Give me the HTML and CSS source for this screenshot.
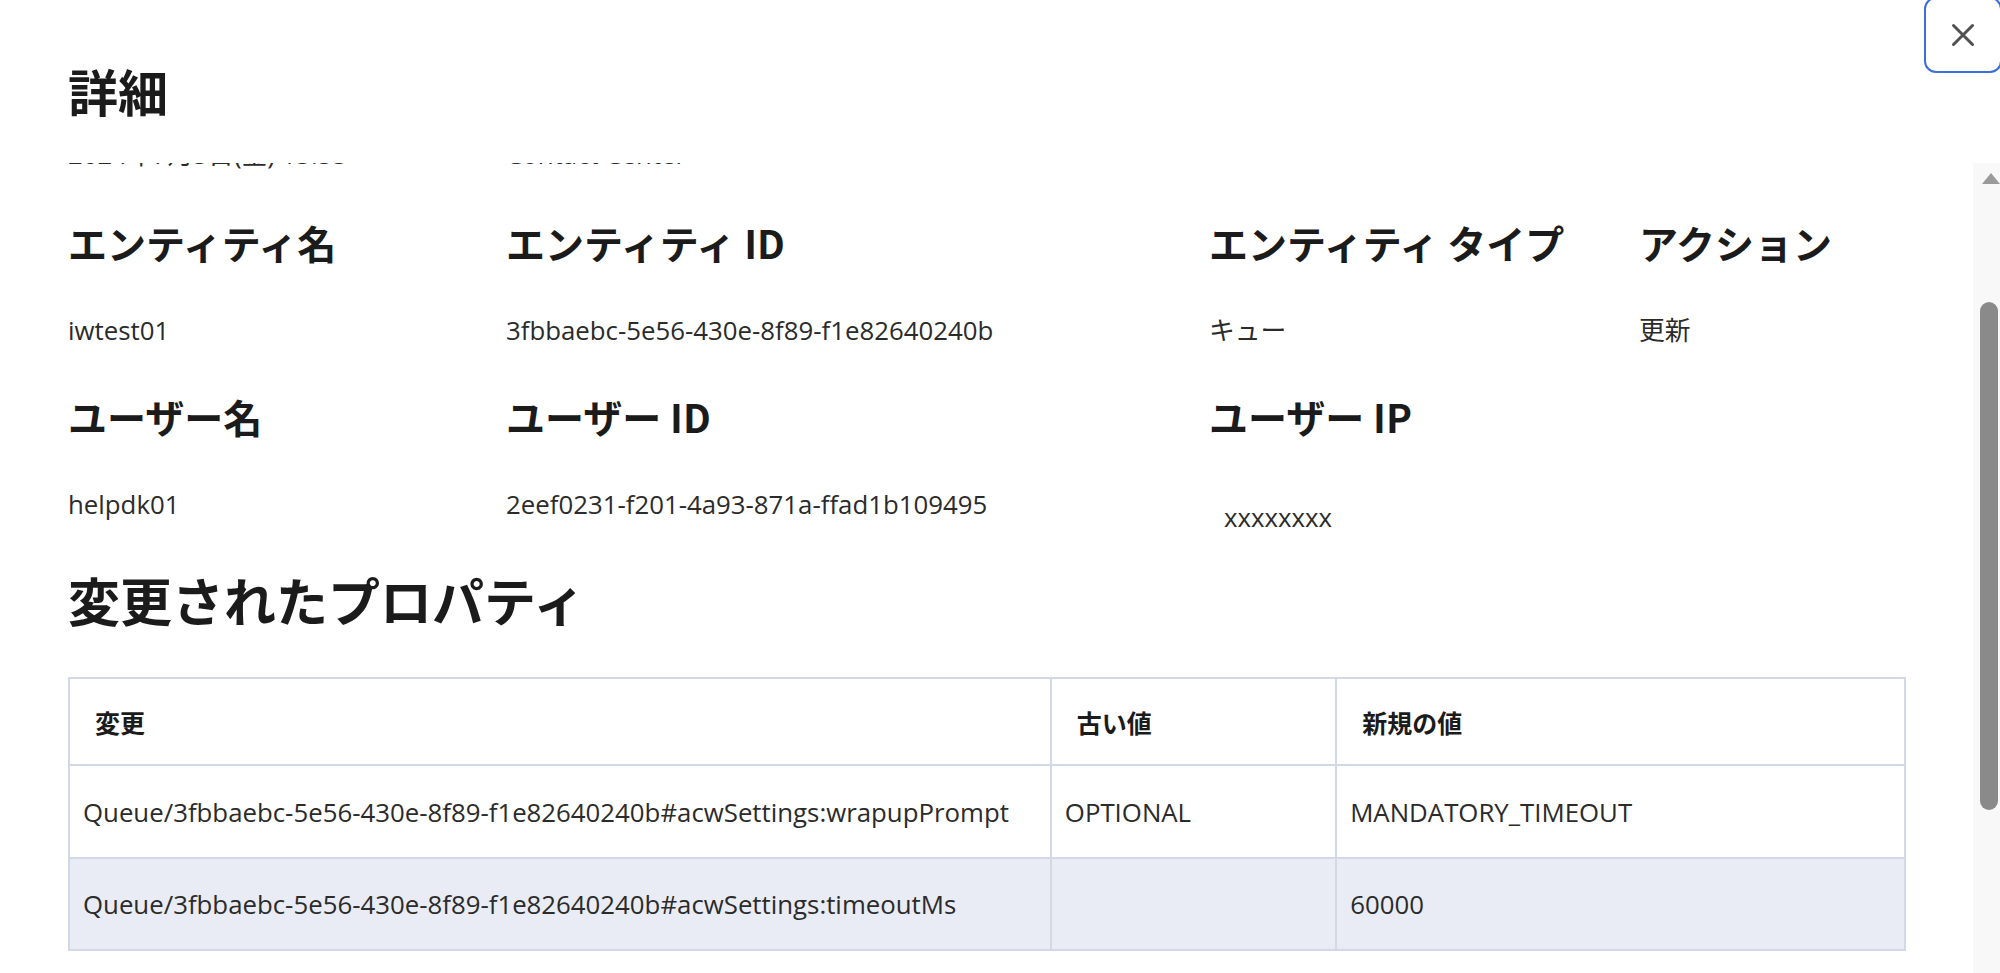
FILE: index.html
```html
<!DOCTYPE html>
<html lang="ja">
<head>
<meta charset="utf-8">
<title>詳細</title>
<link rel="stylesheet" href="styles.css">
</head>
<body>
<div class="dialog">
  <header class="dlg-head">
    <h1 class="dlg-title">詳細</h1>
  </header>
  <button class="close-btn" aria-label="閉じる">
    <svg width="24" height="24" viewBox="0 0 24 24"><path d="M2.5 2.5 L21.5 21.5 M21.5 2.5 L2.5 21.5" stroke="#505050" stroke-width="3" stroke-linecap="round" fill="none"/></svg>
  </button>
  <div class="dlg-body">
    <div class="scroll">
      <div class="content">
        <div class="fields">
          <div class="field field-top"><div class="label">&nbsp;</div><div class="value">2024年7月5日(金) 15:55</div></div>
          <div class="field field-top"><div class="label">&nbsp;</div><div class="value">Contact Center</div></div>
          <div class="field field-top"><div class="label">&nbsp;</div><div class="value">&nbsp;</div></div>
          <div class="field field-top"><div class="label">&nbsp;</div><div class="value">&nbsp;</div></div>

          <div class="field"><div class="label">エンティティ名</div><div class="value">iwtest01</div></div>
          <div class="field"><div class="label">エンティティ ID</div><div class="value">3fbbaebc-5e56-430e-8f89-f1e82640240b</div></div>
          <div class="field"><div class="label">エンティティ タイプ</div><div class="value">キュー</div></div>
          <div class="field"><div class="label">アクション</div><div class="value">更新</div></div>

          <div class="field"><div class="label">ユーザー名</div><div class="value">helpdk01</div></div>
          <div class="field"><div class="label">ユーザー ID</div><div class="value">2eef0231-f201-4a93-871a-ffad1b109495</div></div>
          <div class="field"><div class="label">ユーザー IP</div><div class="value value-ip">xxxxxxxx</div></div>
          <div class="field"></div>
        </div>

        <h2 class="section-title">変更されたプロパティ</h2>

        <table class="changes">
          <thead>
            <tr><th class="c-change">変更</th><th class="c-old">古い値</th><th class="c-new">新規の値</th></tr>
          </thead>
          <tbody>
            <tr><td>Queue/3fbbaebc-5e56-430e-8f89-f1e82640240b#acwSettings:wrapupPrompt</td><td>OPTIONAL</td><td>MANDATORY_TIMEOUT</td></tr>
            <tr class="alt"><td>Queue/3fbbaebc-5e56-430e-8f89-f1e82640240b#acwSettings:timeoutMs</td><td></td><td>60000</td></tr>
          </tbody>
        </table>
      </div>
    </div>
    <div class="scrollbar">
      <div class="sb-arrow"></div>
      <div class="sb-thumb"></div>
    </div>
  </div>
</div>
</body>
</html>
```

FILE: styles.css
```css
* { box-sizing: border-box; }
html, body {
  margin: 0;
  padding: 0;
  width: 2000px;
  height: 973px;
  overflow: hidden;
  background: #ffffff;
}
body {
  font-family: "Open Sans", "Noto Sans CJK JP", sans-serif;
  color: #222;
}
.dialog {
  position: relative;
  width: 2000px;
  height: 973px;
  display: flex;
  flex-direction: column;
}
.dlg-head {
  height: 163px;
  flex: none;
  padding: 61px 0 0 68px;
}
.dlg-title {
  margin: 0;
  font-family: "Noto Sans CJK JP", sans-serif;
  font-size: 50px;
  line-height: 58px;
  font-weight: 700;
  color: #1b1b1b;
}
.close-btn {
  position: absolute;
  top: -3px;
  left: 1924px;
  width: 78px;
  height: 76px;
  border: 2px solid #3c6fd8;
  border-radius: 12px;
  background: #fff;
  display: flex;
  align-items: center;
  justify-content: center;
  padding: 0;
}
.dlg-body {
  flex: 1;
  display: flex;
  min-height: 0;
}
.scroll {
  flex: 1;
  overflow: hidden;
}
.content {
  margin-top: -121px;
  padding: 0 69px 0 68px;
}
.fields {
  display: grid;
  grid-template-columns: 438px 703px 430px 1fr;
}
.field {
  margin-bottom: 45px;
}
.field-top {
  margin-bottom: 47px;
}
.label {
  font-family: "Noto Sans CJK JP", sans-serif;
  font-size: 39px;
  line-height: 48px;
  font-weight: 700;
  color: #1b1b1b;
  white-space: nowrap;
}
.value {
  margin-top: 47px;
  font-size: 25.8px;
  line-height: 34px;
  color: #2b2b2b;
  white-space: nowrap;
}
.value-ip {
  padding: 13px 0 0 15px;
  margin-bottom: -13px;
}
.section-title {
  margin: 5px 0 48px;
  font-family: "Noto Sans CJK JP", sans-serif;
  font-size: 52px;
  line-height: 58px;
  font-weight: 700;
  color: #1b1b1b;
}
.changes {
  width: 1838px;
  border-collapse: collapse;
  font-size: 25.8px;
  color: #2b2b2b;
}
.changes th, .changes td {
  border: 2px solid #d3d8e6;
  text-align: left;
  white-space: nowrap;
}
.changes th {
  height: 87px;
  padding: 0 0 0 25px;
  font-weight: 700;
  font-family: "Noto Sans CJK JP", sans-serif;
  font-size: 25px;
  color: #1b1b1b;
}
.changes td {
  height: 93px;
  padding: 0 0 0 13px;
}
.c-change { width: 982px; }
.c-old { width: 286px; }
.c-new { width: 570px; }
.changes tr.alt td {
  background: #e9ecf4;
  height: 92px;
}
.scrollbar {
  flex: none;
  width: 27px;
  background: #f8f8f8;
  padding-top: 10px;
}
.sb-arrow {
  width: 0;
  height: 0;
  margin-left: 9px;
  border-left: 9px solid transparent;
  border-right: 9px solid transparent;
  border-bottom: 11px solid #9a9a9a;
}
.sb-thumb {
  margin-top: 118px;
  margin-left: 7px;
  width: 18px;
  height: 508px;
  border-radius: 9px;
  background: #8a8a8a;
}
```
